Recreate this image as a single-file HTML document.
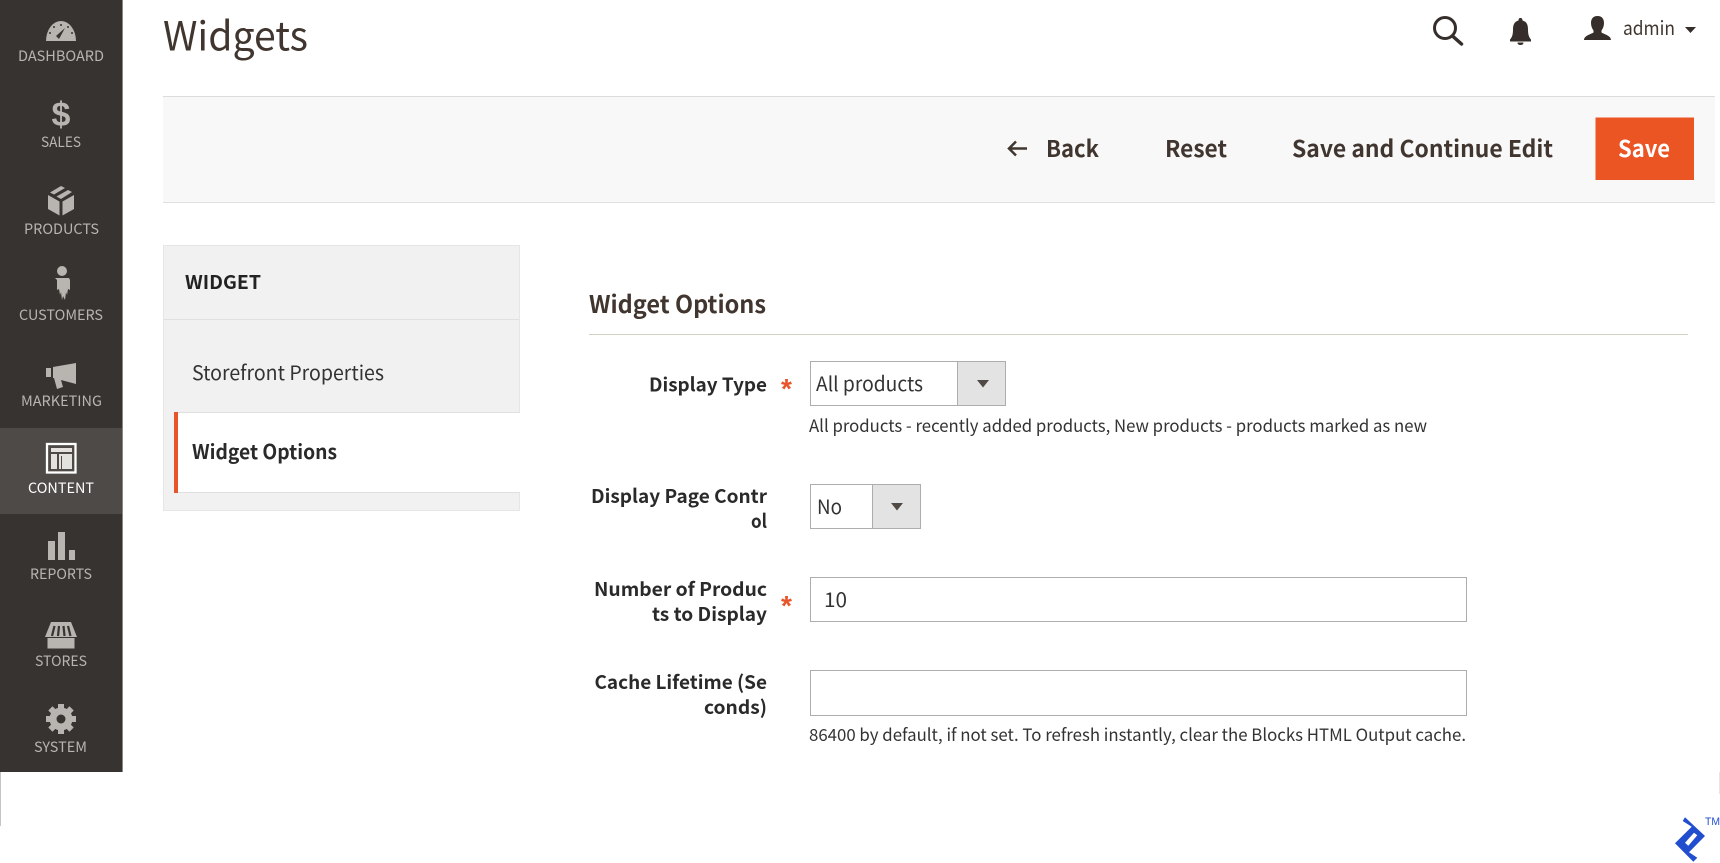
<!DOCTYPE html>
<html lang="en"><head><meta charset="utf-8"><title>Widgets</title>
<style>
html,body{margin:0;padding:0;background:#fff;width:1720px;height:863px;overflow:hidden}
svg{display:block}
text{font-family:"Noto Sans CJK SC","Liberation Sans",sans-serif;fill:#303030;white-space:pre}
.n text{fill:#b8b5b0;font-size:14.5px;text-anchor:start}
.l{font-weight:700;font-size:19px;fill:#2a2a2a}
.r{font-size:17px;fill:#333}
.a{font-weight:700;font-size:23px;fill:#41362f}
.s{font-size:28px;font-weight:700;fill:#e8552a;font-family:"Liberation Sans",sans-serif}
</style></head><body>
<svg width="1720" height="863" viewBox="0 0 1720 863" xmlns="http://www.w3.org/2000/svg">
<rect width="1720" height="863" fill="#fff"/>
<!-- sidebar -->
<rect x="0" y="772" width="1" height="54" fill="#c4c4c4"/>
<rect x="1719" y="772" width="1" height="22" fill="#e6e6e6"/>
<rect width="122" height="772" fill="#373330"/>
<rect x="122" width="1" height="772" fill="#8a8885"/>
<rect y="428" width="122" height="86" fill="#4d4a47"/>
<g class="n">
<g fill="#b8b5b0">
<!-- dashboard -->
<path d="M46 41 a15 20 0 0 1 30 0z"/>
<path d="M59 39l6-11-9 8z" fill="#373330"/>
<g fill="#373330"><circle cx="50" cy="33" r="1"/><circle cx="54" cy="27" r="1"/><circle cx="61" cy="25" r="1"/><circle cx="68" cy="27" r="1"/><circle cx="72" cy="33" r="1"/></g>
<!-- products -->
<path d="M48 195l11.500 6.500v14l-11.500-6.500zM74 195l-11.500 6.500v14l11.500-6.500zM61 186l4 2-11 6.500-4-2zM68 190l4 2-11 7-4.500-2.500z"/>
<!-- customer -->
<circle cx="62" cy="271" r="5"/>
<path d="M55 278h14l1 2v10l-2-1-1 6-1-3-1 8-2-4-1 4-1-8-1 3-1-6-2 1v-10z"/>
<!-- marketing -->
<path d="M46 368h5v9h-5zM53 367L76 363V384L61 380 63 387 57 389 54 378H53z"/>
<!-- reports -->
<rect x="48" y="541" width="7" height="19"/><rect x="58" y="532" width="7" height="28"/><rect x="69" y="550" width="6" height="10"/>
<!-- stores -->
<path d="M51 622H71L77 637H45z"/>
<path d="M47.500 638h27v10.500h-27z"/>
<!-- gear -->
<circle cx="61" cy="719" r="11.500"/>
<g><rect x="58" y="704" width="6" height="7"/><rect x="58" y="704" width="6" height="7" transform="rotate(45 61 719)"/><rect x="58" y="704" width="6" height="7" transform="rotate(90 61 719)"/><rect x="58" y="704" width="6" height="7" transform="rotate(135 61 719)"/><rect x="58" y="704" width="6" height="7" transform="rotate(180 61 719)"/><rect x="58" y="704" width="6" height="7" transform="rotate(225 61 719)"/><rect x="58" y="704" width="6" height="7" transform="rotate(270 61 719)"/><rect x="58" y="704" width="6" height="7" transform="rotate(315 61 719)"/></g>
</g>
<circle cx="61" cy="719" r="4.500" fill="#373330"/>
<path d="M54.500 626L52 636M59 626L58 636M63.500 626L64.500 636M68 626L70.500 636" stroke="#373330" stroke-width="2.200" fill="none"/>
<!-- content icon -->
<rect x="47" y="444" width="28.500" height="28.500" fill="none" stroke="#fff" stroke-width="2.300"/>
<path fill="#e4e2df" d="M51 448h21v4H51zM51 454h6v15h-6zM59 454h13v15H59z"/>
<path fill="#4d4a47" d="M61 456h1v13h-1z"/>
<text x="18" y="61" textLength="86" lengthAdjust="spacingAndGlyphs">DASHBOARD</text>
<text x="61" y="126" style="font-size:34px;font-weight:700;text-anchor:middle;font-family:'Liberation Sans',sans-serif">$</text>
<text x="41" y="147" textLength="40" lengthAdjust="spacingAndGlyphs">SALES</text>
<text x="24" y="234" textLength="75" lengthAdjust="spacingAndGlyphs">PRODUCTS</text>
<text x="19" y="320" textLength="84" lengthAdjust="spacingAndGlyphs">CUSTOMERS</text>
<text x="21" y="406" textLength="81" lengthAdjust="spacingAndGlyphs">MARKETING</text>
<text x="28" y="493" textLength="66" lengthAdjust="spacingAndGlyphs" style="fill:#fff">CONTENT</text>
<text x="30" y="579" textLength="62" lengthAdjust="spacingAndGlyphs">REPORTS</text>
<text x="35" y="666" textLength="52" lengthAdjust="spacingAndGlyphs">STORES</text>
<text x="34" y="752" textLength="53" lengthAdjust="spacingAndGlyphs">SYSTEM</text>
</g>
<!-- header -->
<text x="163" y="50.500" textLength="145" lengthAdjust="spacingAndGlyphs" style="font-size:40px;fill:#41362f">Widgets</text>
<g fill="none" stroke="#352e2a" stroke-width="3"><circle cx="1445" cy="28" r="10.500"/><path d="M1452.500 36l9 8" stroke-linecap="round" stroke-width="3.500"/></g>
<path fill="#352e2a" d="M1520.500 18c1.500 0 2 1 2 2.500 4 1 5.500 4 5.500 9 0 5 1 8 3 10v2h-21v-2c2-2 3-5 3-10 0-5 1.500-8 5.500-9 0-1.500.5-2.500 2-2.500zM1517.500 42.500h6c0 2-1.500 2.500-3 2.500s-3-.5-3-2.500z"/>
<path fill="#352e2a" d="M1597.500 16c4.500 0 6.500 3 6.500 7 0 3-1 5.500-2.500 7.500v2c2 1.500 9.500 3 9.500 7.500h-27c0-4.500 7.500-6 9.500-7.500v-2c-1.500-2-2.500-4.500-2.500-7.500 0-4 2-7 6.500-7z"/>
<text x="1623" y="35" textLength="52" lengthAdjust="spacingAndGlyphs" style="font-size:19px;fill:#41362f">admin</text>
<path fill="#352e2a" d="M1685 27h11l-5.500 6z"/>
<!-- action bar -->
<rect x="163" y="96" width="1552" height="106" fill="#f8f8f8"/>
<rect x="163" y="96" width="1552" height="1" fill="#dcdcdc"/>
<rect x="163" y="202" width="1552" height="1" fill="#e0e0e0"/>
<path d="M1027 148.500h-18M1016 141.500l-7 7 7 7" fill="none" stroke="#41362f" stroke-width="2.500"/>
<text class="a" x="1046" y="157" textLength="53" lengthAdjust="spacingAndGlyphs">Back</text>
<text class="a" x="1165" y="157" textLength="62" lengthAdjust="spacingAndGlyphs">Reset</text>
<text class="a" x="1292" y="157" textLength="261" lengthAdjust="spacingAndGlyphs">Save and Continue Edit</text>
<rect x="1595.500" y="117.500" width="98.500" height="62.500" fill="#eb5423"/>
<text class="a" x="1618" y="157" textLength="52" lengthAdjust="spacingAndGlyphs" style="fill:#fff">Save</text>
<!-- tabs -->
<rect x="163.500" y="245.500" width="356" height="265" fill="#f1f1f1" stroke="#e6e6e6"/>
<rect x="164" y="319" width="355" height="1" fill="#e0e0e0"/>
<text x="185" y="289" textLength="76" lengthAdjust="spacingAndGlyphs" style="font-size:19px;font-weight:700;fill:#222">WIDGET</text>
<text x="192" y="380" textLength="192" lengthAdjust="spacingAndGlyphs" style="font-size:20px;fill:#333">Storefront Properties</text>
<rect x="174" y="413" width="346" height="79" fill="#fff"/>
<rect x="178" y="412" width="342" height="1" fill="#dfdfdf"/>
<rect x="178" y="492" width="342" height="1" fill="#dfdfdf"/>
<rect x="174" y="412" width="4" height="81" fill="#e8552a"/>
<text x="192" y="459" textLength="145" lengthAdjust="spacingAndGlyphs" style="font-size:20px;font-weight:700;fill:#2a2a2a">Widget Options</text>
<!-- form -->
<text x="589" y="313" textLength="177" lengthAdjust="spacingAndGlyphs" style="font-size:24px;font-weight:700;fill:#41362f">Widget Options</text>
<rect x="589" y="334" width="1099" height="1" fill="#d2d2c0"/>
<text class="l" x="649" y="391.500" textLength="118" lengthAdjust="spacingAndGlyphs">Display Type</text>
<text class="s" x="781" y="398">*</text>
<rect x="810.500" y="361.500" width="195" height="44" fill="#fff" stroke="#adadad"/>
<rect x="958" y="362" width="47" height="43" fill="#e3e3e3"/><rect x="957" y="362" width="1" height="43" fill="#adadad"/>
<path fill="#514943" d="M977 380h12l-6 7.500z"/>
<text x="816" y="391" textLength="107" lengthAdjust="spacingAndGlyphs" style="font-size:20px;fill:#333">All products</text>
<text class="r" x="809" y="432" textLength="618" lengthAdjust="spacingAndGlyphs">All products - recently added products, New products - products marked as new</text>
<text class="l" x="591" y="503" textLength="176" lengthAdjust="spacingAndGlyphs">Display Page Contr</text>
<text class="l" x="751" y="528" textLength="16" lengthAdjust="spacingAndGlyphs">ol</text>
<rect x="810.500" y="484.500" width="110" height="44" fill="#fff" stroke="#adadad"/>
<rect x="873" y="485" width="47" height="43" fill="#e3e3e3"/><rect x="872" y="485" width="1" height="43" fill="#adadad"/>
<path fill="#514943" d="M891 503h12l-6 7.500z"/>
<text x="817" y="514" textLength="25" lengthAdjust="spacingAndGlyphs" style="font-size:20px;fill:#333">No</text>
<text class="l" x="594" y="596" textLength="173" lengthAdjust="spacingAndGlyphs">Number of Produc</text>
<text class="l" x="652" y="621" textLength="115" lengthAdjust="spacingAndGlyphs">ts to Display</text>
<text class="s" x="781" y="615">*</text>
<rect x="810.500" y="577.500" width="656" height="44" fill="#fff" stroke="#adadad"/>
<text x="824" y="607" textLength="23" lengthAdjust="spacingAndGlyphs" style="font-size:20px;fill:#333">10</text>
<text class="l" x="594.500" y="689" textLength="172.500" lengthAdjust="spacingAndGlyphs">Cache Lifetime (Se</text>
<text class="l" x="704" y="714" textLength="63" lengthAdjust="spacingAndGlyphs">conds)</text>
<rect x="810.500" y="670.500" width="656" height="45" fill="#fff" stroke="#adadad"/>
<text class="r" x="809" y="741" textLength="657" lengthAdjust="spacingAndGlyphs">86400 by default, if not set. To refresh instantly, clear the Blocks HTML Output cache.</text>
<!-- logo -->
<path fill="#204ecf" fill-rule="evenodd" d="M1685 817.300L1705 836 1689 852.300 1697.300 857.700 1693.300 861.700 1675 843.300 1691.700 826.700 1682.700 821zM1694 832.700L1697.300 835.300 1688.300 845.700 1685 842.700z"/>
<text x="1705" y="825" textLength="15" lengthAdjust="spacingAndGlyphs" style="font-size:11px;fill:#204ecf;font-family:'Liberation Sans',sans-serif">TM</text>
</svg>
</body></html>
